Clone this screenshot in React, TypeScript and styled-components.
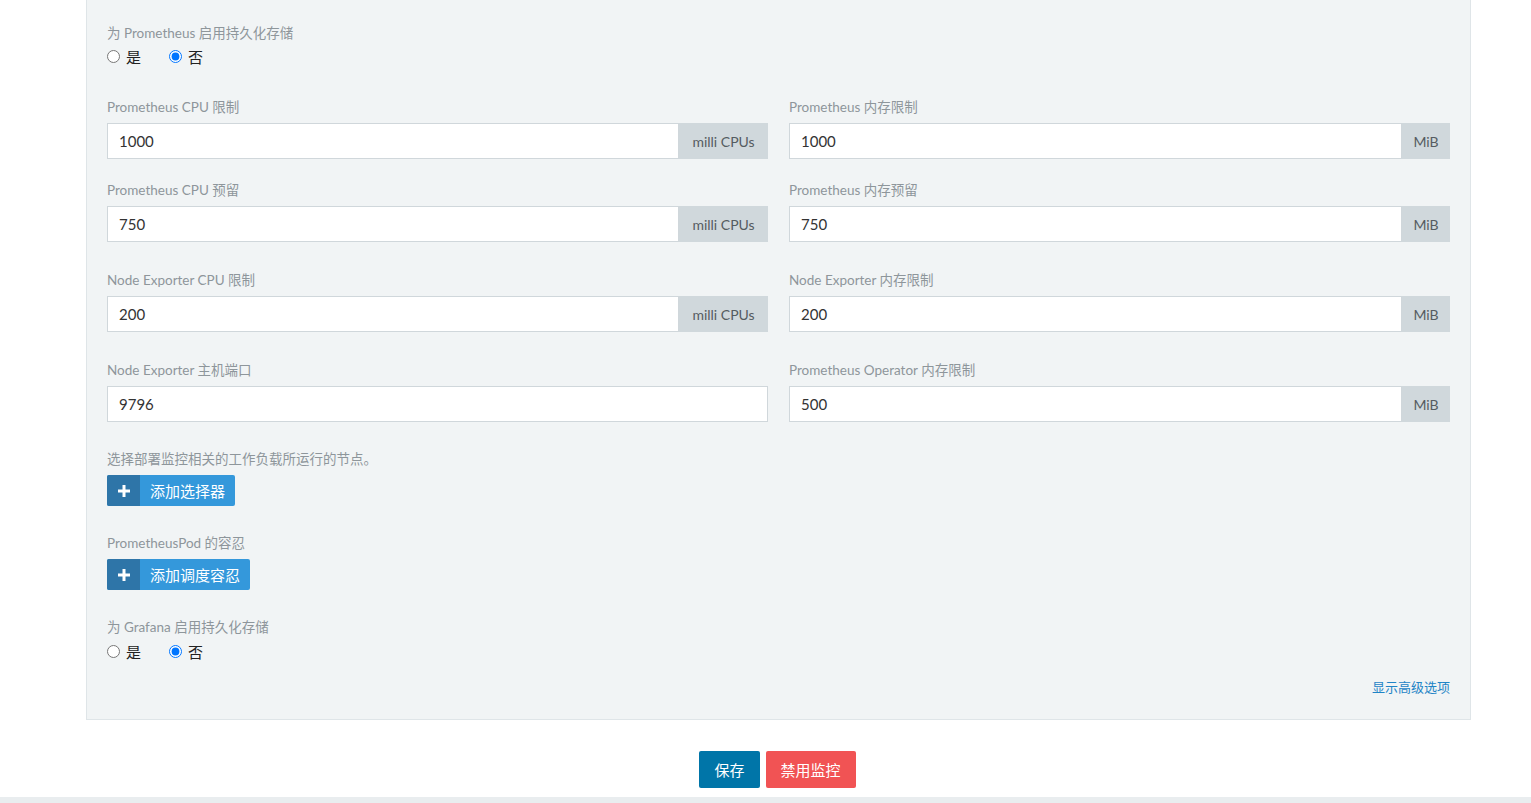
import React, { FunctionComponent } from "react";
import styled, { createGlobalStyle } from "styled-components";

const GlobalStyle = createGlobalStyle`
  html, body {
    margin: 0;
    padding: 0;
    background: #ffffff;
    font-family: Lato, "Noto Sans CJK SC", sans-serif;
  }
  * {
    box-sizing: border-box;
  }
`;

const Page = styled.div`
  width: 1531px;
  height: 803px;
  overflow: hidden;
  display: flex;
  flex-direction: column;
`;

const Panel = styled.div`
  margin-left: 86px;
  width: 1385px;
  background: #f1f4f5;
  border: 1px solid #dfe5e8;
  border-top: none;
  padding: 24px 20px 23px 20px;
`;

const Row = styled.div<{ $gap: number }>`
  display: grid;
  grid-template-columns: 1fr 1fr;
  column-gap: 21px;
  margin-bottom: ${(p) => p.$gap}px;
`;

const Block = styled.div<{ $gap: number }>`
  margin-bottom: ${(p) => p.$gap}px;
`;

const Label = styled.div<{ $mb?: number }>`
  font-size: 13.5px;
  line-height: 18px;
  color: #8e969b;
  margin-bottom: ${(p) => p.$mb ?? 7}px;
`;

const RadioRow = styled.div`
  display: flex;
  align-items: center;
  gap: 28px;
  height: 20px;
`;

const RadioOption = styled.label`
  display: flex;
  align-items: center;
  font-size: 15px;
  color: #222;
  gap: 6px;
  input {
    margin: 0;
    width: 13px;
    height: 13px;
  }
`;

const InputGroup = styled.div`
  display: flex;
  height: 36px;
`;

const TextInput = styled.input`
  flex: 1;
  min-width: 0;
  height: 36px;
  border: 1px solid #d0d7db;
  background: #fff;
  padding: 0 11px;
  font-family: inherit;
  font-size: 15px;
  color: #333;
  outline: none;
`;

const Addon = styled.div<{ $width: number }>`
  width: ${(p) => p.$width}px;
  flex-shrink: 0;
  display: flex;
  align-items: center;
  justify-content: center;
  background: #d0d8dc;
  color: #555c61;
  font-size: 14px;
`;

const AddButton = styled.button`
  display: inline-flex;
  align-items: stretch;
  height: 31px;
  padding: 0;
  border: none;
  border-radius: 2px;
  overflow: hidden;
  background: #3498db;
  color: #fff;
  font-family: inherit;
  font-size: 15px;
  cursor: pointer;
`;

const AddIcon = styled.span`
  width: 33px;
  display: flex;
  align-items: center;
  justify-content: center;
  background: #2e75a8;
`;

const AddText = styled.span`
  display: flex;
  align-items: center;
  padding: 0 10px 0 10px;
`;

const AdvancedRow = styled.div`
  display: flex;
  justify-content: flex-end;
  margin-top: 16px;
`;

const Link = styled.a`
  font-size: 13px;
  color: #1f84c6;
  text-decoration: none;
  cursor: pointer;
`;

const Footer = styled.div`
  display: flex;
  justify-content: center;
  gap: 6px;
  margin-top: 31px;
  margin-left: 24px;
`;

const ActionButton = styled.button<{ $tone: "primary" | "danger" }>`
  height: 37px;
  padding: 0 15px;
  border: none;
  border-radius: 2px;
  font-family: inherit;
  font-size: 15px;
  color: #fff;
  background: ${(p) => (p.$tone === "primary" ? "#0075a8" : "#f15354")};
  cursor: pointer;
`;

const BottomStrip = styled.div`
  margin-top: auto;
  height: 6px;
  background: #e9edef;
`;

const Plus: FunctionComponent = () => (
  <svg width="12" height="12" viewBox="0 0 12 12">
    <path d="M4.5 0h3v4.5H12v3H7.5V12h-3V7.5H0v-3h4.5z" fill="#fff" />
  </svg>
);

const YesNo: FunctionComponent<{ name: string }> = ({ name }) => (
  <RadioRow>
    <RadioOption>
      <input type="radio" name={name} />
      是
    </RadioOption>
    <RadioOption>
      <input type="radio" name={name} defaultChecked />
      否
    </RadioOption>
  </RadioRow>
);

const Field: FunctionComponent<{
  label: string;
  value: string;
  unit?: string;
}> = ({ label, value, unit }) => (
  <div>
    <Label>{label}</Label>
    <InputGroup>
      <TextInput defaultValue={value} />
      {unit && <Addon $width={unit === "MiB" ? 48 : 89}>{unit}</Addon>}
    </InputGroup>
  </div>
);

const App: FunctionComponent = () => {
  return (
    <Page>
      <GlobalStyle />
      <Panel>
        <Block $gap={32}>
          <Label $mb={4}>为 Prometheus 启用持久化存储</Label>
          <YesNo name="prom-pv" />
        </Block>
        <Row $gap={22}>
          <Field label="Prometheus CPU 限制" value="1000" unit="milli CPUs" />
          <Field label="Prometheus 内存限制" value="1000" unit="MiB" />
        </Row>
        <Row $gap={29}>
          <Field label="Prometheus CPU 预留" value="750" unit="milli CPUs" />
          <Field label="Prometheus 内存预留" value="750" unit="MiB" />
        </Row>
        <Row $gap={29}>
          <Field label="Node Exporter CPU 限制" value="200" unit="milli CPUs" />
          <Field label="Node Exporter 内存限制" value="200" unit="MiB" />
        </Row>
        <Row $gap={28}>
          <Field label="Node Exporter 主机端口" value="9796" />
          <Field label="Prometheus Operator 内存限制" value="500" unit="MiB" />
        </Row>
        <Block $gap={28}>
          <Label>选择部署监控相关的工作负载所运行的节点。</Label>
          <AddButton>
            <AddIcon>
              <Plus />
            </AddIcon>
            <AddText>添加选择器</AddText>
          </AddButton>
        </Block>
        <Block $gap={28}>
          <Label>PrometheusPod 的容忍</Label>
          <AddButton>
            <AddIcon>
              <Plus />
            </AddIcon>
            <AddText>添加调度容忍</AddText>
          </AddButton>
        </Block>
        <Block $gap={0}>
          <Label $mb={5}>为 Grafana 启用持久化存储</Label>
          <YesNo name="grafana-pv" />
        </Block>
        <AdvancedRow>
          <Link>显示高级选项</Link>
        </AdvancedRow>
      </Panel>
      <Footer>
        <ActionButton $tone="primary">保存</ActionButton>
        <ActionButton $tone="danger">禁用监控</ActionButton>
      </Footer>
      <BottomStrip />
    </Page>
  );
};

export default App;
